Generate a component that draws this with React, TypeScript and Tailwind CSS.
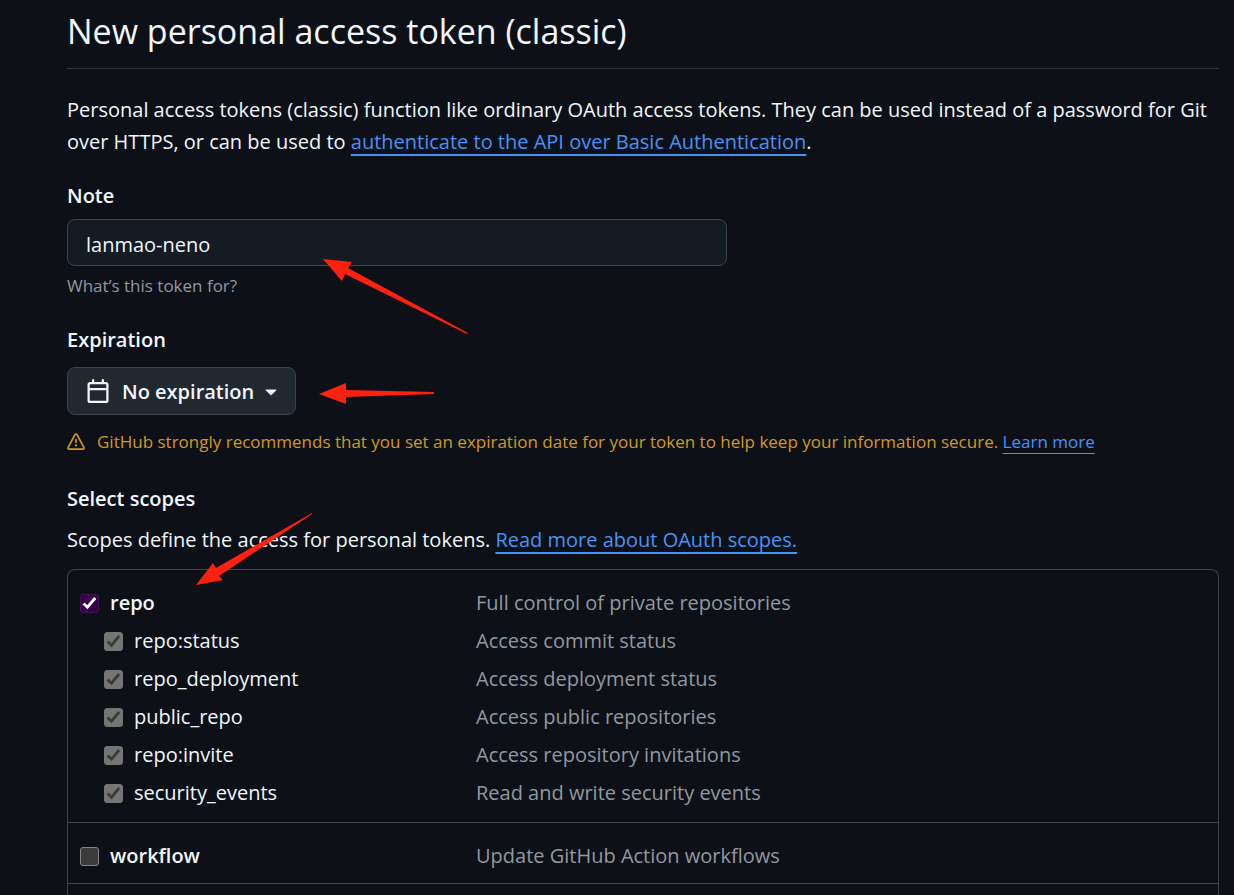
import { useState } from 'react';
import type { ReactNode } from 'react';

type Scope = {
    name: string;
    description: string;
    children?: Scope[];
};

const scopes: Scope[] = [
    {
        name: 'repo',
        description: 'Full control of private repositories',
        children: [
            { name: 'repo:status', description: 'Access commit status' },
            { name: 'repo_deployment', description: 'Access deployment status' },
            { name: 'public_repo', description: 'Access public repositories' },
            { name: 'repo:invite', description: 'Access repository invitations' },
            { name: 'security_events', description: 'Read and write security events' },
        ],
    },
    { name: 'workflow', description: 'Update GitHub Action workflows' },
];

const CalendarIcon = () => (
    <svg viewBox="0 0 16 16" className="h-6 w-6" fill="currentColor" aria-hidden="true">
        <path d="M4.75 0a.75.75 0 0 1 .75.75V2h5V.75a.75.75 0 0 1 1.5 0V2h1.25c.966 0 1.75.784 1.75 1.75v10.5A1.75 1.75 0 0 1 13.25 16H2.75A1.75 1.75 0 0 1 1 14.25V3.75C1 2.784 1.784 2 2.75 2H4V.75A.75.75 0 0 1 4.75 0ZM2.5 7.5v6.75c0 .138.112.25.25.25h10.5a.25.25 0 0 0 .25-.25V7.5Zm10.75-4H2.75a.25.25 0 0 0-.25.25V6h11V3.75a.25.25 0 0 0-.25-.25Z" />
    </svg>
);

const AlertIcon = () => (
    <svg viewBox="0 0 16 16" className="h-[18px] w-[18px] shrink-0" fill="currentColor" aria-hidden="true">
        <path d="M6.457 1.047c.659-1.234 2.427-1.234 3.086 0l6.082 11.378A1.75 1.75 0 0 1 14.082 15H1.918a1.75 1.75 0 0 1-1.543-2.575Zm1.763.707a.25.25 0 0 0-.44 0L1.698 13.132a.25.25 0 0 0 .22.368h12.164a.25.25 0 0 0 .22-.368Zm.53 3.996v2.5a.75.75 0 0 1-1.5 0v-2.5a.75.75 0 0 1 1.5 0ZM9 11a1 1 0 1 1-2 0 1 1 0 0 1 2 0Z" />
    </svg>
);

const CaretIcon = () => (
    <svg viewBox="0 0 16 16" className="h-6 w-6" fill="currentColor" aria-hidden="true">
        <path d="m4.427 7.427 3.396 3.396a.25.25 0 0 0 .354 0l3.396-3.396A.25.25 0 0 0 11.396 7H4.604a.25.25 0 0 0-.177.427Z" />
    </svg>
);

const TextLink = ({ children }: { children: ReactNode }) => (
    <a href="#" className="text-[#4493f8] underline decoration-2 underline-offset-[5px] [text-decoration-skip-ink:none]">
        {children}
    </a>
);

type ScopeRowProps = {
    scope: Scope;
    nested?: boolean;
    checked: boolean;
    onChange?: () => void;
};

const ScopeRow = ({ scope, nested = false, checked, onChange }: ScopeRowProps) => (
    <div className="flex h-[38px] items-center">
        <label className={`flex w-[408px] shrink-0 items-center gap-[11px] ${nested ? 'pl-9' : 'pl-3 font-semibold'}`}>
            <span className="grid shrink-0 place-items-center">
                <input
                    type="checkbox"
                    checked={checked}
                    disabled={nested}
                    onChange={onChange}
                    className="col-start-1 row-start-1 h-[19px] w-[19px] appearance-none rounded-[3px] border border-[#858585] bg-[#3b3b3b] checked:border-[#42104f] checked:bg-[#39004a] disabled:border-[#757575] disabled:bg-[#757575]"
                />
                {checked && (
                    <svg
                        viewBox="0 0 19 19"
                        className={`pointer-events-none col-start-1 row-start-1 h-[19px] w-[19px] ${nested ? 'text-[#3b3b3b]' : 'text-white'}`}
                        fill="none"
                        stroke="currentColor"
                        strokeWidth="2.8"
                        aria-hidden="true"
                    >
                        <path d="M3.6 9.6l3.8 3.6 7.8-9.2" />
                    </svg>
                )}
            </span>
            {scope.name}
        </label>
        <span className="text-[#9198a1]">{scope.description}</span>
    </div>
);

// Red pointers laid over the form
const Arrows = () => (
    <svg
        width="480"
        height="600"
        className="pointer-events-none absolute left-0 top-0"
        fill="#ff2010"
        aria-hidden="true"
    >
        <path d="M323 259l29 3-4 6 120 65-1 1-122-60-3 7z" />
        <path d="M319 394l27-11v7l88 2v2l-88 3v7z" />
        <path d="M196 585l17-22 3 5 96-55v1l-93 62 4 4z" />
    </svg>
);

export default function App() {
    const [note, setNote] = useState('lanmao-neno');
    const [selected, setSelected] = useState<string[]>(['repo']);

    const toggle = (name: string) => {
        setSelected((prev) => (prev.includes(name) ? prev.filter((n) => n !== name) : [...prev, name]));
    };

    return (
        <div className="relative h-screen overflow-hidden bg-[#0d1117] pl-[67px] pr-[15px] font-['Open_Sans','Noto_Sans',sans-serif] text-[20px] leading-8 text-[#f0f6fc]">
            <h1 className="border-b border-[#2d333b] pb-[13px] pt-[7px] text-[34px] leading-[48px]">
                New personal access token (classic)
            </h1>
            <p className="mt-[25px]">
                Personal access tokens (classic) function like ordinary OAuth access tokens. They can be used instead of
                a password for Git over HTTPS, or can be used to{' '}
                <TextLink>authenticate to the API over Basic Authentication</TextLink>.
            </p>

            <div className="mt-[22px] flex flex-col items-start">
                <label htmlFor="note" className="font-semibold">
                    Note
                </label>
                <input
                    id="note"
                    type="text"
                    value={note}
                    onChange={(e) => setNote(e.target.value)}
                    className="mt-[7px] h-[47px] w-full max-w-[660px] rounded-lg border border-[#3d444d] bg-[#151b23] px-[18px] pt-[3px]"
                />
                <p className="mt-1 text-[17px] text-[#9198a1]">What’s this token for?</p>
            </div>

            <div className="mt-[22px] flex flex-col items-start">
                <h2 className="font-semibold">Expiration</h2>
                <button
                    type="button"
                    className="mt-[11px] flex h-12 items-center rounded-lg border border-[#3d444d] bg-[#212830] pl-[18px] pr-3 font-semibold"
                >
                    <CalendarIcon />
                    <span className="ml-3 mr-[5px] pt-[2px]">No expiration</span>
                    <CaretIcon />
                </button>
                <p className="mt-[11px] flex items-center gap-3 text-[17px] text-[#d29922]">
                    <AlertIcon />
                    <span>
                        GitHub strongly recommends that you set an expiration date for your token to help keep your
                        information secure.{' '}
                        <a
                            href="#"
                            className="text-[#4493f8] underline decoration-1 underline-offset-[5px] [text-decoration-skip-ink:none]"
                        >
                            Learn more
                        </a>
                    </span>
                </p>
            </div>

            <h2 className="mt-[25px] font-semibold">Select scopes</h2>
            <p className="mt-[9px]">
                Scopes define the access for personal tokens. <TextLink>Read more about OAuth scopes.</TextLink>
            </p>

            <div className="mt-[13px] rounded-t-lg border border-b-0 border-[#3d444d] pb-8">
                {scopes.map((scope) => {
                    const checked = selected.includes(scope.name);
                    return (
                        <div
                            key={scope.name}
                            className={`border-b border-[#3d444d] pt-[14px] ${scope.children ? 'pb-[10px]' : 'pb-2'}`}
                        >
                            <ScopeRow scope={scope} checked={checked} onChange={() => toggle(scope.name)} />
                            {scope.children?.map((child) => (
                                <ScopeRow key={child.name} scope={child} nested checked={checked} />
                            ))}
                        </div>
                    );
                })}
            </div>

            <Arrows />
        </div>
    );
}
